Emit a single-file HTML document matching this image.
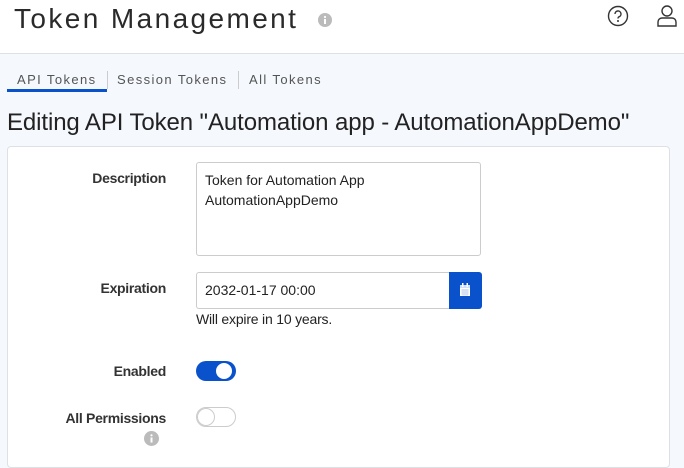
<!DOCTYPE html>
<html><head><style>
body{margin:0;width:684px;height:455px;overflow:hidden;background:#f5f8fd;font-family:"Liberation Sans",sans-serif;color:#222;position:relative}
.hdr{position:absolute;left:0;top:0;width:684px;height:53px;background:#fff;border-bottom:1px solid #dde1e6}
.t{position:absolute;left:14px;top:3px;font-size:28px;letter-spacing:2.4px;color:#2a2a2a}
.tabs{position:absolute;top:72px;font-size:13px;letter-spacing:1.4px;color:#555}
.card{position:absolute;left:7px;top:146px;width:661px;height:320px;background:#fff;border:1px solid #dde1e6;border-radius:4px}
.lbl{position:absolute;right:518px;font-size:14px;font-weight:bold;color:#333;letter-spacing:-0.3px}
.ta{position:absolute;left:196px;top:162px;width:283px;height:92px;border:1px solid #ccc;border-radius:3px;background:#fff;font-size:14px;line-height:20px;padding:0;}
</style></head><body>
<div class="hdr">
<div class="t">Token Management</div>
<svg style="position:absolute;left:318px;top:13px" width="14" height="14"><circle cx="7" cy="7" r="7" fill="#bbb"/><rect x="6" y="6" width="2" height="5" fill="#fff"/><circle cx="7" cy="4" r="1.1" fill="#fff"/></svg>
<svg style="position:absolute;left:607px;top:5px" width="22" height="22"><circle cx="11" cy="11" r="9.5" fill="none" stroke="#333" stroke-width="1.4"/><path d="M8 9a3 3 0 1 1 4 2.8c-.8.4-1 .9-1 1.7" fill="none" stroke="#333" stroke-width="1.4"/><circle cx="11" cy="16" r="1" fill="#333"/></svg>
<svg style="position:absolute;left:656px;top:4px" width="22" height="24"><circle cx="11" cy="7" r="5" fill="none" stroke="#333" stroke-width="1.4"/><path d="M2 22v-4a4 4 0 0 1 4-4h10a4 4 0 0 1 4 4v4z" fill="none" stroke="#333" stroke-width="1.4"/></svg>
</div>
<div class="tabs" style="left:17px">API Tokens</div>
<div style="position:absolute;left:7px;top:89px;width:100px;height:3px;background:#0a52cc"></div>
<div style="position:absolute;left:107px;top:71px;width:1px;height:18px;background:#ccc"></div>
<div class="tabs" style="left:117px">Session Tokens</div>
<div style="position:absolute;left:238px;top:71px;width:1px;height:18px;background:#ccc"></div>
<div class="tabs" style="left:249px">All Tokens</div>
<div style="position:absolute;left:7px;top:109px;font-size:24px;color:#222;letter-spacing:-0.1px">Editing API Token "Automation app - AutomationAppDemo"</div>
<div class="card"></div>
<div class="lbl" style="top:170px">Description</div>
<div class="ta"><div style="padding:7px 0 0 8px">Token for Automation App<br>AutomationAppDemo</div></div>
<div class="lbl" style="top:280px">Expiration</div>
<div style="position:absolute;left:196px;top:272px;border:1px solid #ccc;border-right:none;border-radius:3px 0 0 3px;background:#fff;font-size:14px;line-height:35px;padding-left:8px;box-sizing:border-box;width:254px;height:37px">2032-01-17 00:00</div>
<div style="position:absolute;left:449px;top:272px;width:33px;height:37px;background:#0a52cc;border-radius:0 3px 3px 0"><svg style="position:absolute;left:10px;top:11px" width="12" height="14"><rect x="1" y="2" width="10" height="11" fill="#fff"/><rect x="1" y="2" width="10" height="3" fill="#cfe0ff"/><rect x="3" y="0" width="1.5" height="4" fill="#fff"/><rect x="7.5" y="0" width="1.5" height="4" fill="#fff"/><path d="M2 7h8M2 9h8M2 11h8M4 6v7M6 6v7M8 6v7" stroke="#9db9ea" stroke-width=".5"/></svg></div>
<div style="position:absolute;left:196px;top:311px;font-size:14px;letter-spacing:-0.2px">Will expire in 10 years.</div>
<div class="lbl" style="top:363px">Enabled</div>
<div style="position:absolute;left:196px;top:361px;width:40px;height:20px;border-radius:10px;background:#0a52cc"><div style="position:absolute;left:20px;top:2px;width:16px;height:16px;border-radius:50%;background:#fff"></div></div>
<div class="lbl" style="top:410px">All Permissions</div>
<div style="position:absolute;left:196px;top:407px;width:38px;height:18px;border-radius:10px;background:#fff;border:1px solid #ccc"><div style="position:absolute;left:1px;top:1px;width:16px;height:16px;border-radius:50%;background:#fff;box-shadow:0 0 0 1px #ccc"></div></div>
<svg style="position:absolute;left:144px;top:431px" width="15" height="15"><circle cx="7.5" cy="7.5" r="7.5" fill="#bbb"/><rect x="6.5" y="6.5" width="2" height="5" fill="#fff"/><circle cx="7.5" cy="4.3" r="1.1" fill="#fff"/></svg>
</body></html>
